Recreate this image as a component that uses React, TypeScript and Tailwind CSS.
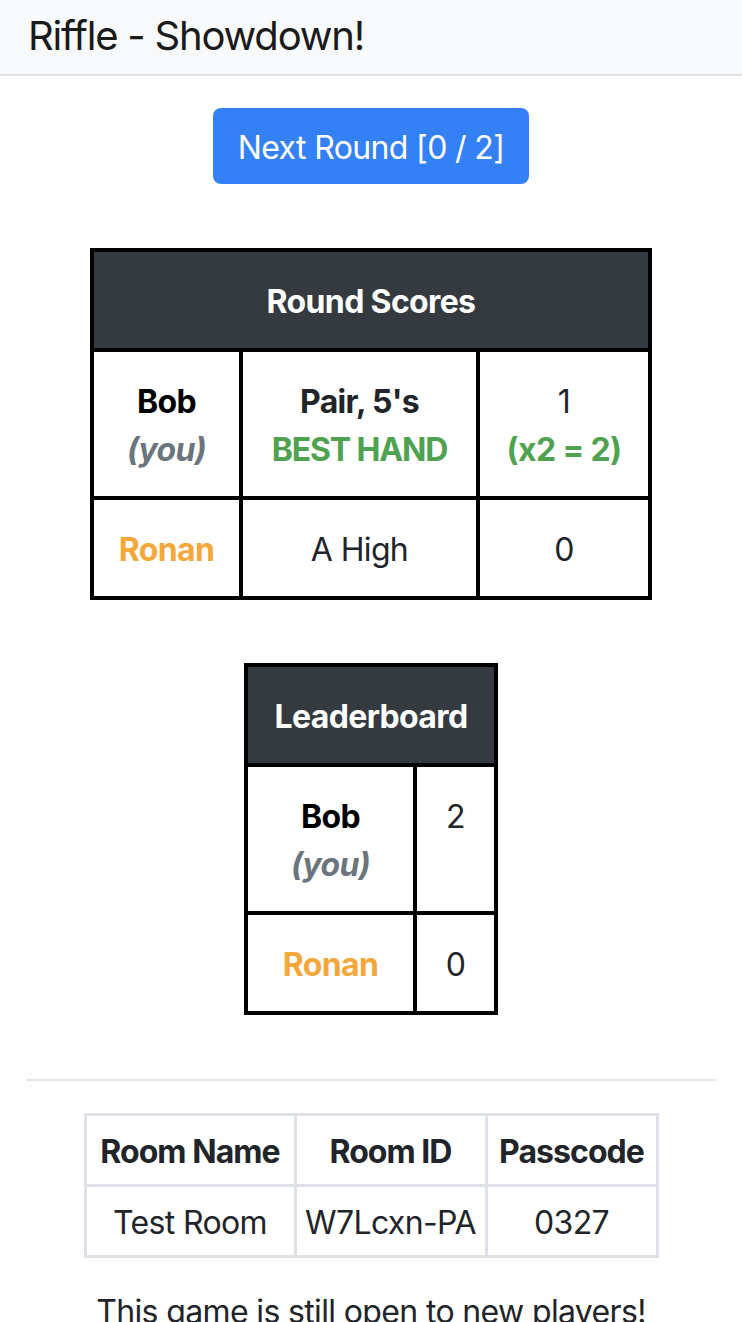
import React from "react";

type Row = {
  name: string;
  you?: boolean;
  color: string;
  hand?: string;
  best?: boolean;
  score: number;
  bonus?: string;
};

const ROUND: Row[] = [
  { name: "Bob", you: true, color: "text-black", hand: "Pair, 5's", best: true, score: 1, bonus: "(x2 = 2)" },
  { name: "Ronan", color: "text-[#f4a73b]", hand: "A High", score: 0 },
];

const BOARD: Row[] = [
  { name: "Bob", you: true, color: "text-black", score: 2 },
  { name: "Ronan", color: "text-[#f4a73b]", score: 0 },
];

const td = "border-4 border-black px-[16px] pt-[26px] pb-[22px] align-top text-center leading-[48px] whitespace-nowrap";
const th = "border-4 border-black bg-[#343a40] text-white font-bold pt-[26px] pb-[22px] leading-[48px]";

function PlayerCell({ row }: { row: Row }) {
  return (
    <td className={td}>
      <div className={`font-bold ${row.color}`}>{row.name}</div>
      {row.you && <div className="font-bold italic text-[#6c757d]">(you)</div>}
    </td>
  );
}

export default function App() {
  return (
    <div className="min-h-[1322px] bg-white text-[32px] text-[#212529] tracking-[-0.02em] font-['Inter','Noto_Sans',sans-serif]">
      <div className="h-[76px] bg-[#f8f9fa] border-b-2 border-[#dee2e6] flex items-center pl-[28px] pb-[2px]">
        <span className="text-[40px] text-[#1a1a1a] tracking-[-0.03em]">Riffle - Showdown!</span>
      </div>

      <div className="px-[26px] pt-[32px] flex flex-col items-center">
        <button className="h-[76px] w-[316px] rounded-[8px] bg-[#3381f5] text-white text-[32px] pt-[4px]">
          Next Round [0 / 2]
        </button>

        <table className="mt-[64px] border-collapse table-fixed w-[562px]">
          <colgroup>
            <col className="w-[149px]" />
            <col className="w-[237px]" />
            <col className="w-[172px]" />
          </colgroup>
          <thead>
            <tr>
              <th colSpan={3} className={th}>
                Round Scores
              </th>
            </tr>
          </thead>
          <tbody>
            {ROUND.map((r) => (
              <tr key={r.name}>
                <PlayerCell row={r} />
                <td className={td}>
                  <div className={r.best ? "font-bold" : ""}>{r.hand}</div>
                  {r.best && <div className="font-bold text-[#4fa24f] tracking-[-0.035em]">BEST HAND</div>}
                </td>
                <td className={td}>
                  <div>{r.score}</div>
                  {r.bonus && <div className="font-bold text-[#4fa24f]">{r.bonus}</div>}
                </td>
              </tr>
            ))}
          </tbody>
        </table>

        <table className="mt-[63px] border-collapse table-fixed w-[254px]">
          <colgroup>
            <col className="w-[169px]" />
            <col className="w-[81px]" />
          </colgroup>
          <thead>
            <tr>
              <th colSpan={2} className={th}>
                Leaderboard
              </th>
            </tr>
          </thead>
          <tbody>
            {BOARD.map((r) => (
              <tr key={r.name}>
                <PlayerCell row={r} />
                <td className={td}>{r.score}</td>
              </tr>
            ))}
          </tbody>
        </table>

        <hr className="mt-[64px] w-full border-0 border-t-2 border-[#e6e6e6]" />

        <table className="mt-[32px] border-collapse table-fixed w-[575px]">
          <colgroup>
            <col className="w-[210px]" />
            <col className="w-[191px]" />
            <col className="w-[171px]" />
          </colgroup>
          <thead>
            <tr>
              {["Room Name", "Room ID", "Passcode"].map((h) => (
                <th key={h} className="border-[3px] border-[#dee2e6] pt-[12px] pb-[8px] leading-[48px] font-bold whitespace-nowrap tracking-[-0.03em]">
                  {h}
                </th>
              ))}
            </tr>
          </thead>
          <tbody>
            <tr>
              {["Test Room", "W7Lcxn-PA", "0327"].map((c) => (
                <td key={c} className="border-[3px] border-[#dee2e6] pt-[12px] pb-[8px] leading-[48px] text-center whitespace-nowrap">
                  {c}
                </td>
              ))}
            </tr>
          </tbody>
        </table>

        <p className="mt-[30px] leading-[48px] text-center whitespace-nowrap">This game is still open to new players!</p>
      </div>
    </div>
  );
}
